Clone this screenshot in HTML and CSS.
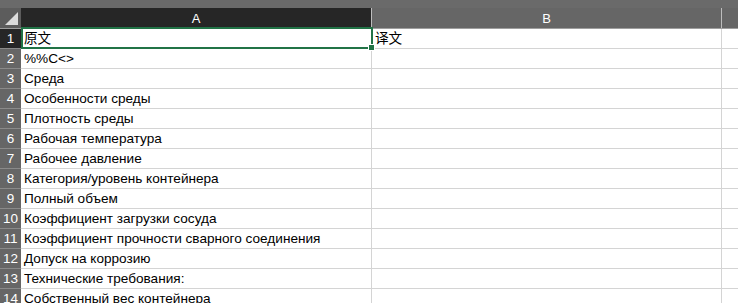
FILE: index.html
```html
<!DOCTYPE html>
<html>
<head>
<meta charset="utf-8">
<link rel="stylesheet" href="styles.css">
</head>
<body>
<div class="sheet">
  <div class="topstrip"></div>
  <div class="hdr">
    <div class="corner"><span class="tri"></span></div>
    <div class="colh colA sel">A</div>
    <div class="colh colB">B</div>
    <div class="colh colC"></div>
  </div>
  <div class="row">
    <div class="rh sel">1</div>
    <div class="cell a active">原文<span class="handle"></span></div>
    <div class="cell b">译文</div>
    <div class="cell c"></div>
  </div>
  <div class="row"><div class="rh">2</div><div class="cell a">%%C&lt;&gt;</div><div class="cell b"></div><div class="cell c"></div></div>
  <div class="row"><div class="rh">3</div><div class="cell a">Среда</div><div class="cell b"></div><div class="cell c"></div></div>
  <div class="row"><div class="rh">4</div><div class="cell a">Особенности среды</div><div class="cell b"></div><div class="cell c"></div></div>
  <div class="row"><div class="rh">5</div><div class="cell a">Плотность среды</div><div class="cell b"></div><div class="cell c"></div></div>
  <div class="row"><div class="rh">6</div><div class="cell a">Рабочая температура</div><div class="cell b"></div><div class="cell c"></div></div>
  <div class="row"><div class="rh">7</div><div class="cell a">Рабочее давление</div><div class="cell b"></div><div class="cell c"></div></div>
  <div class="row"><div class="rh">8</div><div class="cell a">Категория/уровень контейнера</div><div class="cell b"></div><div class="cell c"></div></div>
  <div class="row"><div class="rh">9</div><div class="cell a">Полный объем</div><div class="cell b"></div><div class="cell c"></div></div>
  <div class="row"><div class="rh">10</div><div class="cell a">Коэффициент загрузки сосуда</div><div class="cell b"></div><div class="cell c"></div></div>
  <div class="row"><div class="rh">11</div><div class="cell a">Коэффициент прочности сварного соединения</div><div class="cell b"></div><div class="cell c"></div></div>
  <div class="row"><div class="rh">12</div><div class="cell a">Допуск на коррозию</div><div class="cell b"></div><div class="cell c"></div></div>
  <div class="row"><div class="rh">13</div><div class="cell a">Технические требования:</div><div class="cell b"></div><div class="cell c"></div></div>
  <div class="row"><div class="rh">14</div><div class="cell a">Собственный вес контейнера</div><div class="cell b"></div><div class="cell c"></div></div>
</div>
</body>
</html>
```

FILE: styles.css
```css
html, body {
  margin: 0;
  padding: 0;
  background: #ffffff;
  overflow: hidden;
}
.sheet {
  width: 738px;
  height: 303px;
  overflow: hidden;
  font-family: "Liberation Sans", Arial, "Noto Sans CJK SC", sans-serif;
}
.topstrip {
  height: 8px;
  background: #6a6a6a;
}
.hdr {
  display: flex;
  height: 20px;
  background: #666666;
  border-bottom: 1px solid #9e9e9e;
}
.corner {
  position: relative;
  width: 21px;
  flex: none;
  background: #5c5c5c;
}
.tri {
  position: absolute;
  right: 3px;
  bottom: 3px;
  width: 0;
  height: 0;
  border-left: 13px solid transparent;
  border-bottom: 13px solid #dcdcdc;
}
.colh {
  flex: none;
  color: #ffffff;
  font-size: 13px;
  display: flex;
  align-items: center;
  justify-content: center;
  box-sizing: border-box;
  padding-top: 1px;
}
.colA { width: 351px; border-right: 1px solid #bdbdbd; }
.colA.sel { background: #262626; }
.colB { width: 350px; border-right: 1px solid #bdbdbd; }
.colC { flex: 1; }
.row {
  display: flex;
  height: 20px;
}
.rh {
  width: 21px;
  flex: none;
  box-sizing: border-box;
  background: #666666;
  color: #ffffff;
  font-size: 13.5px;
  text-align: center;
  line-height: 19px;
  border-bottom: 1px solid #8a8a8a;
}
.rh.sel { background: #262626; }
.cell {
  flex: none;
  box-sizing: border-box;
  border-bottom: 1px solid #d4d4d4;
  border-right: 1px solid #d4d4d4;
  font-size: 13.6px;
  line-height: 19px;
  padding-left: 3px;
  color: #000000;
  white-space: nowrap;
  overflow: visible;
}
.cell.a { width: 351px; }
.cell.b { width: 350px; }
.cell.c { flex: 1; border-right: none; }
.cell.active {
  position: relative;
  z-index: 2;
}
.cell.active::before {
  content: "";
  position: absolute;
  left: 0;
  top: -2px;
  right: -2px;
  bottom: -1px;
  border: 2px solid #217346;
  pointer-events: none;
}
.handle {
  position: absolute;
  right: -4px;
  bottom: -3px;
  width: 5px;
  height: 5px;
  background: #217346;
  border: 1px solid #ffffff;
}
```
